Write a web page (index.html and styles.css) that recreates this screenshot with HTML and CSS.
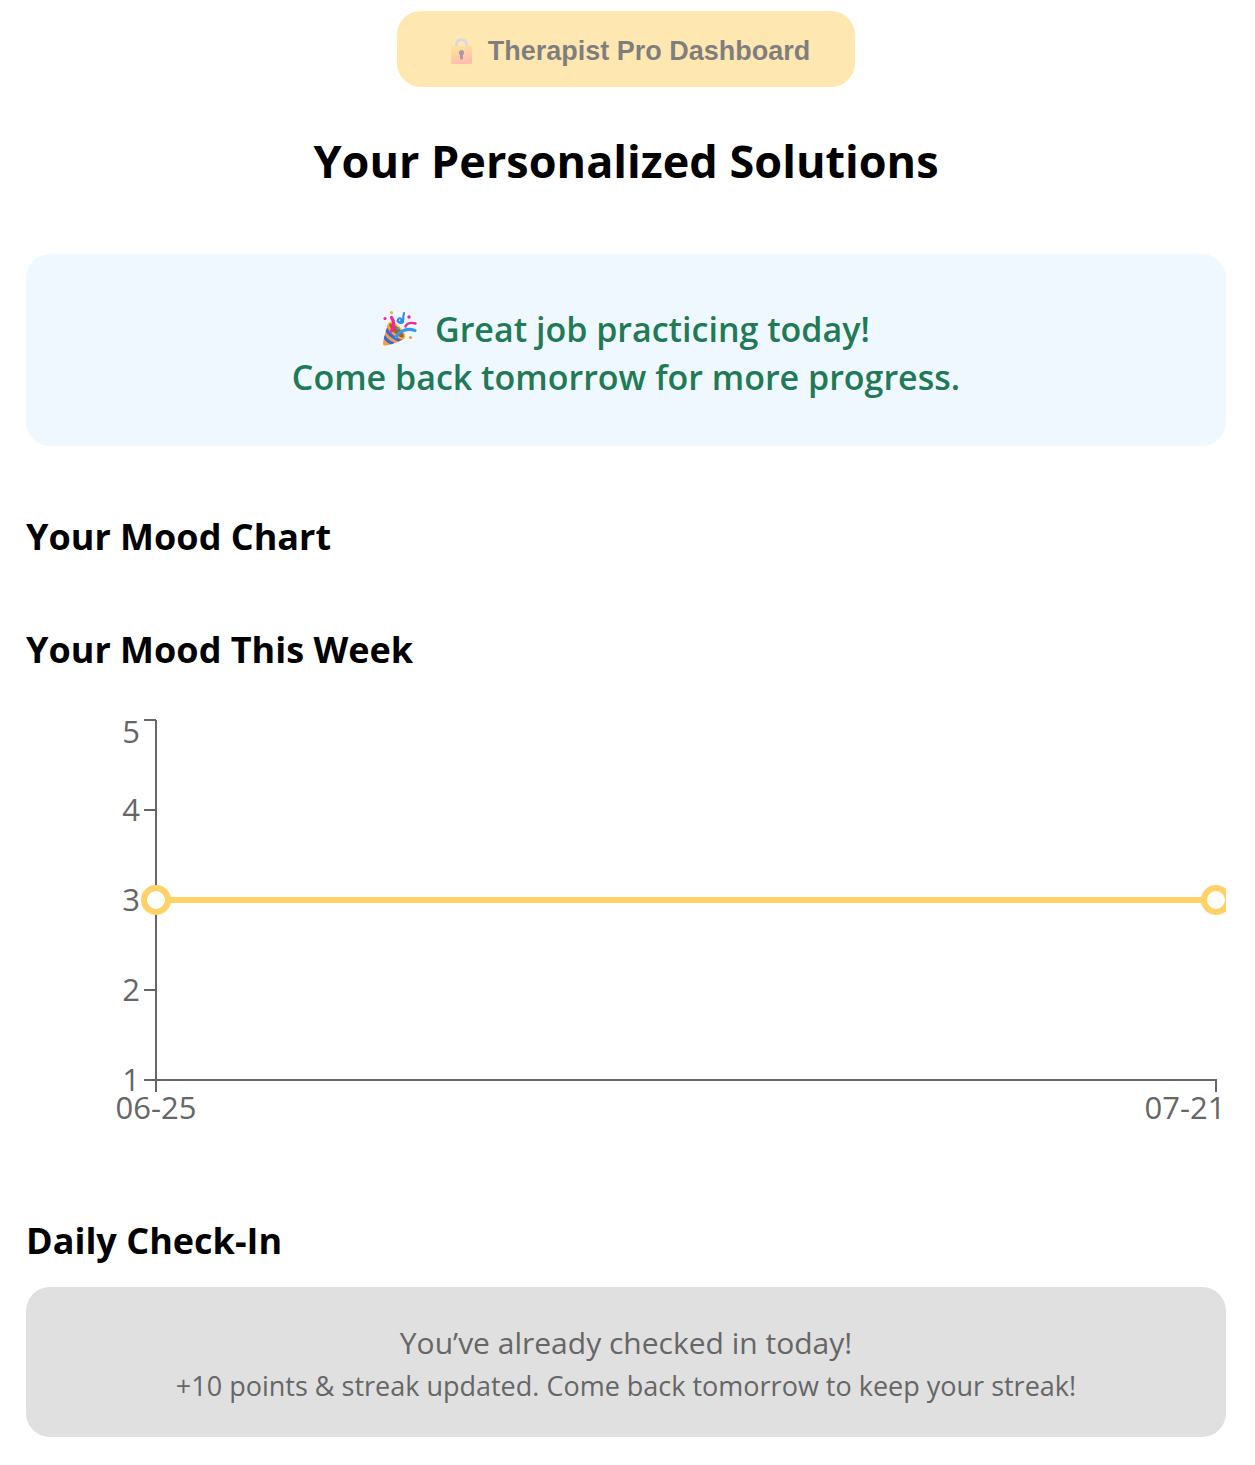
FILE: index.html
```html
<!DOCTYPE html>
<html lang="en">
<head>
    <meta charset="UTF-8">
    <meta name="viewport" content="width=device-width, initial-scale=1.0">
    <title>Your Personalized Solutions</title>
    <link rel="stylesheet" href="styles.css">
</head>
<body>

    <button class="pro-button" disabled>
        <svg class="lock-icon" viewBox="0 0 21 26" aria-hidden="true">
            <defs>
                <linearGradient id="lockBody" x1="0" y1="0" x2="0.4" y2="1">
                    <stop offset="0.2" stop-color="#ffc03c"/>
                    <stop offset="1" stop-color="#ff7e5c"/>
                </linearGradient>
            </defs>
            <path d="M5.500 10V6.500a5 5 0 0 1 10 0V10" fill="none" stroke="#b5b1c6" stroke-width="3"/>
            <rect x="0" y="8" width="21" height="18" rx="1.500" fill="url(#lockBody)"/>
            <path d="M10.500 12a2.800 2.800 0 0 1 1.500 5.100V20a1.500 1.500 0 0 1-3 0v-2.900a2.800 2.800 0 0 1 1.500-5.100z" fill="#533566"/>
        </svg>
        Therapist Pro Dashboard
    </button>

    <h1>Your Personalized Solutions</h1>

    <div class="practice-done">
        <p>
            <svg class="party-icon" viewBox="0 0 36 36" aria-hidden="true">
                <defs>
                    <clipPath id="coneClip">
                        <path d="M7 12C5 14 1 29 1 33q0 2 3 1.500C10 33.500 21 29 23 27 22 21 14 11 7 12z"/>
                    </clipPath>
                </defs>
                <g clip-path="url(#coneClip)">
                    <rect width="36" height="36" fill="#f3a13c"/>
                    <path d="M4 18q4 8 15 12M2 25q3 6 10 8" fill="none" stroke="#3b66e0" stroke-width="3.200"/>
                    <path d="M5 14q5 10 16 15" fill="none" stroke="#d98524" stroke-width="1.500"/>
                </g>
                <ellipse cx="14.500" cy="19.500" rx="4" ry="10.500" transform="rotate(-46 14.500 19.500)" fill="#a4631c" stroke="#f7b548" stroke-width="1.500"/>
                <path d="M9.500 20C13 14 12 10 9.500 6.500" fill="none" stroke="#f5259b" stroke-width="3.200" stroke-linecap="round"/>
                <path d="M14 26C18 19 26 17 33 19.500" fill="none" stroke="#3799ec" stroke-width="3.200" stroke-linecap="round"/>
                <path d="M22 2C20 9 23 12 18.500 12c-4 0-3-6 0-4.500 3 2-1 5-3 2.500" fill="none" stroke="#2d8fe8" stroke-width="2.200" stroke-linecap="round"/>
                <path d="M23.500 15.500C25 11.500 30 11.500 33.500 12.500" fill="none" stroke="#f5259b" stroke-width="2.500" stroke-linecap="round"/>
                <circle cx="3" cy="7.500" r="1.600" fill="#f5259b"/>
                <circle cx="27" cy="6" r="1.700" fill="#f5259b"/>
                <circle cx="9.500" cy="1.700" r="1.600" fill="#eeb04e"/>
                <circle cx="28.500" cy="26.500" r="1.600" fill="#e5a04a"/>
                <circle cx="16" cy="17.500" r="1.500" fill="#3799ec"/>
            </svg>
            Great job practicing today!<br>
            Come back tomorrow for more progress.
        </p>
    </div>

    <section>
        <h2>Your Mood Chart</h2>
    </section>

    <section>
        <h2>Your Mood This Week</h2>
        <svg class="mood-chart" viewBox="0 0 1200 440" role="img" aria-label="Mood from 06-25 to 07-21">
            <path class="axis" d="M118 10h12M118 100h12M118 190h12M118 280h12M118 370h12M130 10v372M130 370h1060v12"/>
            <g class="y-labels">
                <text x="114" y="33">5</text>
                <text x="114" y="111">4</text>
                <text x="114" y="201">3</text>
                <text x="114" y="291">2</text>
                <text x="114" y="381">1</text>
            </g>
            <g class="x-labels">
                <text x="130" y="409">06-25</text>
                <text x="1159" y="409">07-21</text>
            </g>
            <path class="mood-line" d="M130 190H1190"/>
            <circle class="mood-dot" cx="130" cy="190" r="12"/>
            <circle class="mood-dot" cx="1190" cy="190" r="12"/>
        </svg>
    </section>

    <section>
        <h2>Daily Check-In</h2>
        <button class="checkin-button" disabled>
            You’ve already checked in today!
            <span class="checkin-note">+10 points &amp; streak updated. Come back tomorrow to keep your streak!</span>
        </button>
    </section>

</body>
</html>
```

FILE: styles.css
```css
body {
    margin: 0;
    padding: 11px 29px 28px 26px;
    font-family: "Segoe UI", "Open Sans", "Noto Sans", sans-serif;
    background-color: #fff;
    color: #000;
}
button {
    border: none;
    border-radius: 24px;
}
.pro-button {
    display: flex;
    align-items: center;
    gap: 16px;
    margin: 0 auto;
    padding: 24px 45px 20px 54px;
    font-family: "Liberation Sans", Arial, sans-serif;
    font-size: 27px;
    font-weight: bold;
    line-height: 32px;
    background-color: #ffd166;
    color: #000;
    opacity: 0.5;
}
.lock-icon {
    width: 21px;
    height: 26px;
}
h1 {
    margin: 42px 0 61px;
    font-size: 45px;
    font-weight: bold;
    line-height: 64px;
    text-align: center;
}
h2 {
    margin: 0;
    font-size: 36px;
    font-weight: bold;
    line-height: 48px;
}
.practice-done {
    padding: 51px 48px 45px;
    margin-bottom: 67px;
    border-radius: 24px;
    background-color: #f0f8ff;
    color: #217a55;
    font-size: 34px;
    font-weight: 600;
    line-height: 48px;
    text-align: center;
}
.practice-done p {
    margin: 0;
}
.party-icon {
    width: 36px;
    height: 36px;
    margin-right: 8px;
    vertical-align: -5px;
}
section {
    margin-bottom: 65px;
}
section:last-of-type {
    margin-bottom: 0;
}
.mood-chart {
    display: block;
    width: 100%;
    margin-top: 36px;
    margin-bottom: 67px;
    font-size: 31px;
    fill: #666;
}
.axis {
    fill: none;
    stroke: #666;
    stroke-width: 2;
}
.y-labels {
    text-anchor: end;
}
.x-labels {
    text-anchor: middle;
}
.mood-line {
    fill: none;
    stroke: #ffd166;
    stroke-width: 6;
}
.mood-dot {
    fill: #fff;
    stroke: #ffd166;
    stroke-width: 6;
}
.checkin-button {
    display: block;
    width: 100%;
    margin-top: 22px;
    padding: 32px;
    font-family: inherit;
    font-size: 30px;
    line-height: 48px;
    background-color: #e0e0e0;
    color: #666;
}
.checkin-note {
    display: block;
    font-size: 27px;
    line-height: 38px;
}
```
